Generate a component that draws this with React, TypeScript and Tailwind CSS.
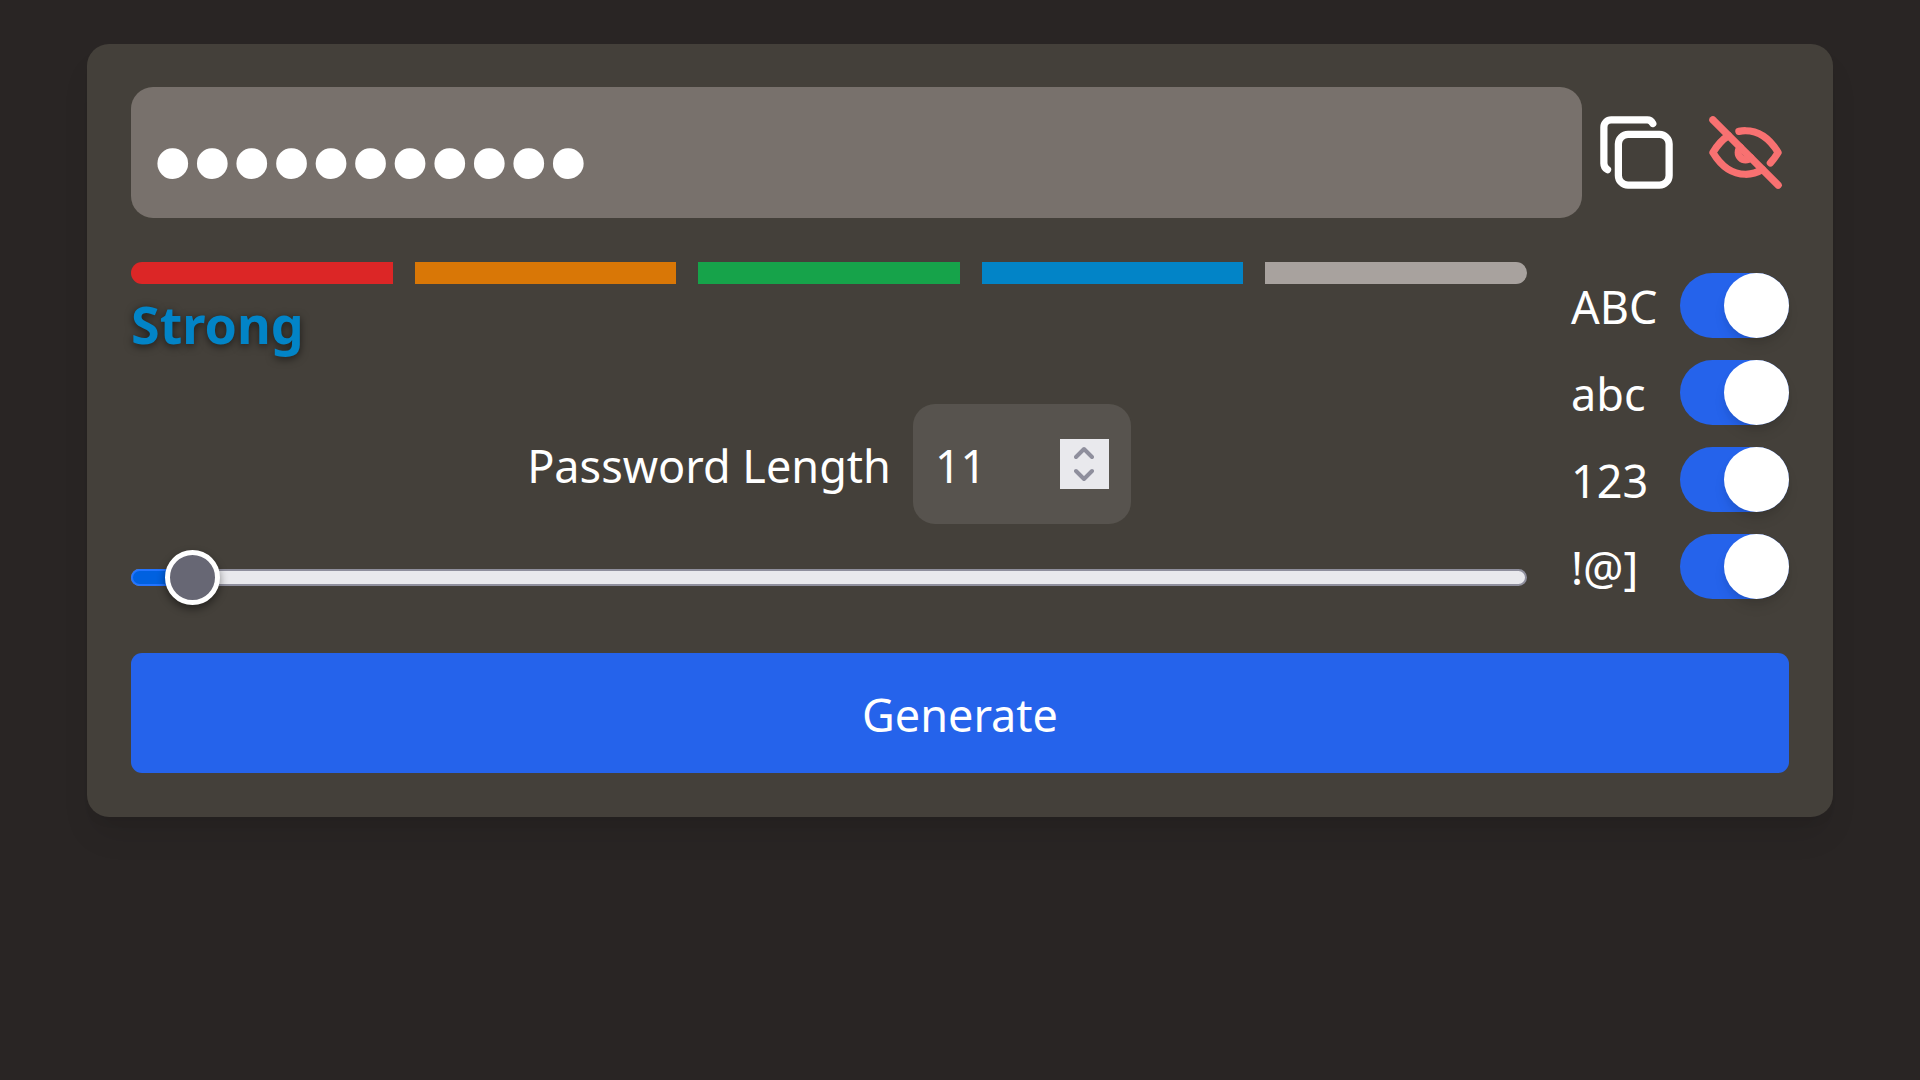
import { useState } from "react";

const CHARSETS = ["ABC", "abc", "123", "!@]"];
const MIN_LENGTH = 8;
const MAX_LENGTH = 128;
const POOL = "ABCDEFGHJKLMNPQRSTUVWXYZabcdefghijkmnpqrstuvwxyz23456789!@]";

function makePassword(length: number) {
  let out = "";
  for (let i = 0; i < length; i++) {
    out += POOL[Math.floor(Math.random() * POOL.length)];
  }
  return out;
}

function CopyIcon() {
  return (
    <svg viewBox="0 0 24 24" className="size-[87px]" fill="none" stroke="currentColor" strokeWidth="2" strokeLinecap="round" strokeLinejoin="round" aria-hidden="true">
      <path d="M7 9.667a2.667 2.667 0 0 1 2.667 -2.667h8.666a2.667 2.667 0 0 1 2.667 2.667v8.666a2.667 2.667 0 0 1 -2.667 2.667h-8.666a2.667 2.667 0 0 1 -2.667 -2.667z" />
      <path d="M4.012 16.737a2.005 2.005 0 0 1 -1.012 -1.737v-10c0 -1.1 .9 -2 2 -2h10c.75 0 1.158 .385 1.5 1" />
    </svg>
  );
}

function EyeOffIcon() {
  return (
    <svg viewBox="0 0 24 24" className="size-[87px]" fill="none" stroke="currentColor" strokeWidth="2" strokeLinecap="round" strokeLinejoin="round" aria-hidden="true">
      <path d="M10.585 10.587a2 2 0 0 0 2.829 2.828" />
      <path d="M16.681 16.673a8.717 8.717 0 0 1 -4.681 1.327c-3.6 0 -6.6 -2 -9 -6c1.272 -2.12 2.712 -3.678 4.32 -4.674m2.86 -1.146a9.055 9.055 0 0 1 1.82 -.18c3.6 0 6.6 2 9 6c-.666 1.11 -1.379 2.067 -2.138 2.87" />
      <path d="M3 3l18 18" />
    </svg>
  );
}

function StrengthMeter() {
  return (
    <div className="grid h-[22px] grid-cols-5 gap-[22px]">
      <div className="rounded-l-full bg-[#dc2626]" />
      <div className="bg-[#d97706]" />
      <div className="bg-[#16a34a]" />
      <div className="bg-[#0284c7]" />
      <div className="rounded-r-full bg-[#a8a29e]" />
    </div>
  );
}

function LengthField({ value, onChange }: { value: number; onChange: (n: number) => void }) {
  return (
    <div className="mt-[40px] flex items-center justify-center gap-[22px]">
      <label htmlFor="length" className="pt-1">Password Length</label>
      <div className="flex h-[120px] w-[218px] items-center justify-between rounded-[22px] bg-[#57534e] px-[22px]">
        <input
          id="length"
          type="number"
          min={MIN_LENGTH}
          max={MAX_LENGTH}
          value={value}
          onChange={(e) => onChange(Number(e.target.value))}
          className="w-[112px] bg-transparent pt-1 outline-none [appearance:textfield] [&::-webkit-inner-spin-button]:appearance-none"
        />
        <div className="flex h-[50px] w-[49px] flex-col bg-[#e9e9ed] text-[#8f8f9d]">
          <button type="button" aria-label="Increase" onClick={() => onChange(value + 1)} className="flex flex-1 items-end justify-center pb-1">
            <svg viewBox="0 0 20 14" className="h-[14px] w-[20px]" fill="none" stroke="currentColor" strokeWidth="4" strokeLinecap="round" strokeLinejoin="round" aria-hidden="true">
              <path d="M2 11l8-8 8 8" />
            </svg>
          </button>
          <button type="button" aria-label="Decrease" onClick={() => onChange(value - 1)} className="flex flex-1 items-start justify-center pt-1">
            <svg viewBox="0 0 20 14" className="h-[14px] w-[20px]" fill="none" stroke="currentColor" strokeWidth="4" strokeLinecap="round" strokeLinejoin="round" aria-hidden="true">
              <path d="M2 3l8 8 8-8" />
            </svg>
          </button>
        </div>
      </div>
    </div>
  );
}

function LengthSlider({ value, onChange }: { value: number; onChange: (n: number) => void }) {
  const ratio = (value - MIN_LENGTH) / (MAX_LENGTH - MIN_LENGTH);
  return (
    <div className="relative mt-[22px] flex h-[63px] items-center">
      <div className="h-[17px] w-full overflow-hidden rounded-full border-2 border-[#8f8f9d] bg-[#e9e9ed]" />
      <div
        className="absolute left-0 h-[17px] rounded-l-full border-2 border-[#2374ff] bg-[#0061e0]"
        style={{ width: `calc(28px + ${ratio} * (100% - 55px))` }}
      />
      <input
        type="range"
        aria-label="Password length slider"
        min={MIN_LENGTH}
        max={MAX_LENGTH}
        value={value}
        onChange={(e) => onChange(Number(e.target.value))}
        className="absolute inset-x-0 h-[55px] w-full cursor-pointer appearance-none bg-transparent outline-none [&::-webkit-slider-thumb]:size-[55px] [&::-webkit-slider-thumb]:appearance-none [&::-webkit-slider-thumb]:rounded-full [&::-webkit-slider-thumb]:border-[5px] [&::-webkit-slider-thumb]:border-white [&::-webkit-slider-thumb]:bg-[#676774] [&::-webkit-slider-thumb]:shadow-[0_4px_8px_rgba(0,0,0,0.45)]"
      />
    </div>
  );
}

function CharsetToggle({ name }: { name: string }) {
  return (
    <label className="flex h-[65px] items-center justify-between">
      <span className="pt-1">{name}</span>
      <input
        type="checkbox"
        role="switch"
        defaultChecked
        className="h-[65px] w-[109px] cursor-pointer appearance-none rounded-full bg-[#78716c] before:block before:size-[65px] before:rounded-full before:bg-white before:shadow-[0_9px_13px_-2px_rgba(0,0,0,0.1),0_4px_9px_-4px_rgba(0,0,0,0.1)] checked:bg-[#2563eb] checked:before:translate-x-[44px]"
      />
    </label>
  );
}

export default function App() {
  const [length, setLength] = useState(11);
  const [password, setPassword] = useState("k7Rw@pX2m]Q");
  const [visible, setVisible] = useState(false);

  return (
    <div className="min-h-screen bg-[#292524] px-[87px] py-[44px] font-['Noto_Sans',sans-serif] text-[45px] leading-[60px] text-white">
      <main className="flex flex-col gap-[44px] rounded-[22px] bg-[#44403a] p-[44px] pt-[43px] shadow-[0_22px_33px_-7px_rgba(0,0,0,0.1),0_9px_13px_-9px_rgba(0,0,0,0.1)]">
        <div className="flex items-center">
          <input
            readOnly
            aria-label="Generated password"
            type={visible ? "text" : "password"}
            value={password}
            className={
              visible
                ? "h-[131px] min-w-0 flex-1 rounded-[22px] bg-[#78716c] px-[22px] text-[68px] outline-none"
                : "h-[131px] min-w-0 flex-1 rounded-[22px] bg-[#78716c] px-[22px] pt-[18px] font-['Liberation_Sans',sans-serif] text-[113px] outline-none"
            }
          />
          <button type="button" aria-label="Copy password" onClick={() => navigator.clipboard?.writeText(password)} className="ml-[11px]">
            <CopyIcon />
          </button>
          <button type="button" aria-label="Toggle visibility" onClick={() => setVisible(!visible)} className="ml-[22px] text-[#f87171]">
            <EyeOffIcon />
          </button>
        </div>

        <div className="flex items-center gap-[44px]">
          <div className="min-w-0 flex-1">
            <StrengthMeter />
            <p className="text-[52px] leading-[80px] font-bold text-[#0284c7] [text-shadow:0_2px_9px_rgba(0,0,0,0.6)]">Strong</p>
            <LengthField value={length} onChange={setLength} />
            <LengthSlider value={length} onChange={setLength} />
          </div>
          <div className="flex w-[218px] flex-col gap-[22px]">
            {CHARSETS.map((name) => (
              <CharsetToggle key={name} name={name} />
            ))}
          </div>
        </div>

        <button type="button" onClick={() => setPassword(makePassword(length))} className="h-[120px] w-full rounded-[11px] bg-[#2563eb] pt-1">
          Generate
        </button>
      </main>
    </div>
  );
}
